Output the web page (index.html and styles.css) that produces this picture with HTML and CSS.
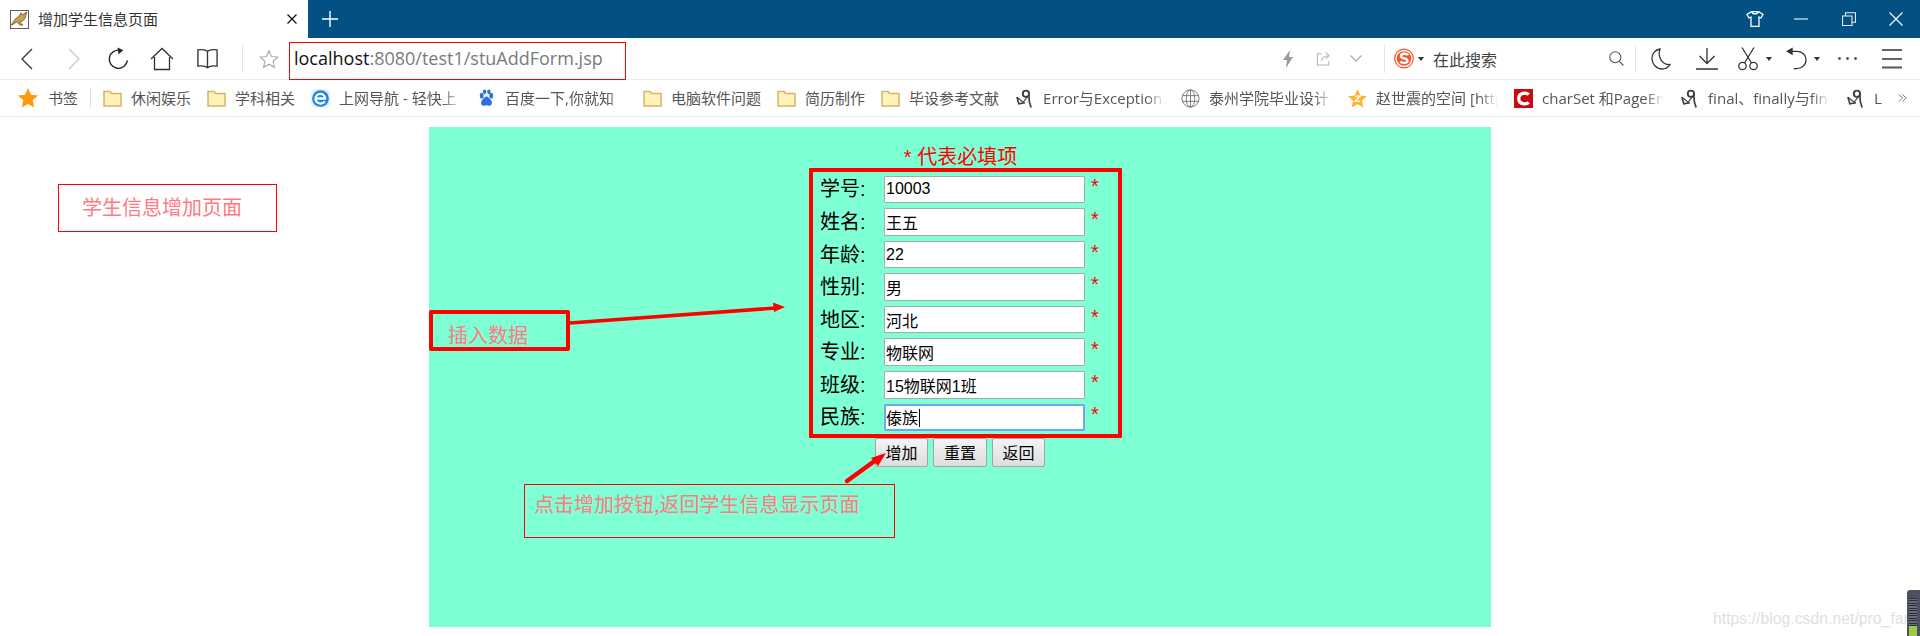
FILE: index.html
```html
<!DOCTYPE html>
<html lang="zh">
<head>
<meta charset="utf-8">
<title>增加学生信息页面</title>
<link rel="stylesheet" href="styles.css">
</head>
<body>
<div class="titlebar">
  <div class="tab">
    <svg class="favicon" viewBox="0 0 20 20"><rect x=".5" y=".5" width="19" height="19" fill="#fff" stroke="#555"/><path d="M1.500 16c3-6 5-8 8-9l2-4 2 2 4-3-1.500 6c-1 3-4 4.500-6 4.500l3.500 3.500-3.500-.5-3-3-3 2z" fill="#c9a24a" stroke="#5d3f17" stroke-width=".8"/></svg>
    <span class="tab-title">增加学生信息页面</span>
    <svg class="tab-close" viewBox="0 0 10 10"><path d="M.5.5l9 9M9.500.5l-9 9" stroke="#111" stroke-width="1.300" fill="none"/></svg>
  </div>
  <svg class="newtab" viewBox="0 0 16 16"><path d="M8 0v16M0 8h16" stroke="#fff" stroke-width="1.400" fill="none"/></svg>
  <div class="winbtns">
    <svg class="w-shirt" viewBox="0 0 18 16"><path d="M5.500.7H12.500L17 3.500l-2 3.500-2-1v9.300H5V6L3 7 1 3.500zM6 1c.5 2.500 5.500 2.500 6 0" fill="none" stroke="#fff" stroke-width="1.300"/></svg>
    <svg class="w-min" viewBox="0 0 14 14"><path d="M0 7h14" stroke="#dfe8ef" stroke-width="1.200"/></svg>
    <svg class="w-rest" viewBox="0 0 14 14"><path d="M.5 4h9.500v9.500H.5zM3.500 4V.8h10v9.400H10" fill="none" stroke="#e8eef3" stroke-width="1.100"/></svg>
    <svg class="w-close" viewBox="0 0 14 14"><path d="M.5.5l13 13M13.500.5l-13 13" stroke="#f3f6f8" stroke-width="1.200"/></svg>
  </div>
</div>

<div class="toolbar">
  <svg class="i i-back" viewBox="0 0 24 22"><path d="M17 1 7 11l10 10" fill="none" stroke="#333" stroke-width="1.300"/></svg>
  <svg class="i i-fwd" viewBox="0 0 24 22"><path d="M7 1l10 10L7 21" fill="none" stroke="#c9c9c9" stroke-width="1.300"/></svg>
  <svg class="i i-reload" viewBox="0 0 24 24"><path d="M14 3.500A9.500 9.500 0 1 0 21.300 14" fill="none" stroke="#222" stroke-width="1.500"/><path d="M11 .5l6 3-5 4z" fill="#222"/></svg>
  <svg class="i i-home" viewBox="0 0 24 24"><path d="M1 12 12 1.500 23 12M4.500 10v12.500h15V10" fill="none" stroke="#333" stroke-width="1.300"/></svg>
  <svg class="i i-book" viewBox="0 0 24 24"><path d="M12 4.500C10 2.800 6 2.500 2 3v17c4-.5 8 0 10 1.500 2-1.500 6-2 10-1.500V3c-4-.5-8-.2-10 1.500zM12 4.500v17" fill="none" stroke="#333" stroke-width="1.400"/></svg>
  <span class="vsep vsep-a"></span>
  <svg class="i i-star" viewBox="0 0 24 24"><path d="M12 2l3 7 7.500.7-5.600 5 1.700 7.300L12 18.200 5.400 22l1.700-7.300-5.600-5L9 9z" fill="none" stroke="#a8a8a8" stroke-width="1.300"/></svg>
  <div class="url"><span class="host">localhost</span>:8080/test1/stuAddForm.jsp</div>
  <svg class="i i-bolt" viewBox="0 0 10 18"><path d="M7 0 0 10h4l-1 8 7-11H6z" fill="#9a9a9a"/></svg>
  <svg class="i i-share" viewBox="0 0 16 16"><path d="M6 3H1.500v12h12v-4M6 11c0-4 3-6 8-6M10.500 1.500 14 5l-3.500 3.500" fill="none" stroke="#b5b5b5" stroke-width="1.100"/></svg>
  <svg class="i i-chev" viewBox="0 0 12 7"><path d="M.5.5 6 6l5.500-5.500" fill="none" stroke="#a5a5a5" stroke-width="1.100"/></svg>
  <span class="vsep vsep-b"></span>
  <svg class="i i-sogou" viewBox="0 0 20 24"><circle cx="10" cy="11.500" r="9.300" fill="#fff" stroke="#f2572b" stroke-width="1.200"/><circle cx="10" cy="11.500" r="7.300" fill="#f2572b"/><path d="M14 8.300c-1-2-7-2.500-7 .9 0 3 6.500 1.500 6.500 4.600 0 2.700-5.500 2.700-7.300.7" fill="none" stroke="#fff" stroke-width="2.400"/></svg>
  <span class="caret-down caret-s"></span>
  <span class="search-text">在此搜索</span>
  <svg class="i i-search" viewBox="0 0 15 15"><circle cx="6.300" cy="6.300" r="5.500" fill="none" stroke="#555" stroke-width="1.100"/><path d="m10.300 10.300 4.200 4.200" stroke="#555" stroke-width="1.100"/></svg>
  <span class="vsep vsep-c"></span>
  <svg class="i i-moon" viewBox="0 0 20 22"><path d="M9 1C3.500 2 .8 6.500 1 11c.3 5.500 4.500 10 10 10 3.500 0 6.500-1.800 8-4.500C12 17 6 10 9 1z" fill="none" stroke="#333" stroke-width="1.300"/></svg>
  <svg class="i i-down" viewBox="0 0 22 22"><path d="M11 0v15M3.500 8 11 15.500 18.500 8M0 21h22" fill="none" stroke="#333" stroke-width="1.300"/></svg>
  <svg class="i i-scis" viewBox="0 0 20 24"><circle cx="4.500" cy="19" r="3.700" fill="none" stroke="#333" stroke-width="1.300"/><circle cx="15.500" cy="19" r="3.700" fill="none" stroke="#333" stroke-width="1.300"/><path d="M6.500 16 16 .5M13.500 16 4 .5" fill="none" stroke="#333" stroke-width="1.300"/></svg>
  <span class="caret-down caret-x"></span>
  <svg class="i i-undo" viewBox="0 0 22 24"><path d="M6 4h5c6 0 10 3.500 10 9s-5 9-10 9H8" fill="none" stroke="#333" stroke-width="1.300"/><path d="M0 4l7-4v8z" fill="#333"/></svg>
  <span class="caret-down caret-u"></span>
  <svg class="i i-dots" viewBox="0 0 19 3"><circle cx="1.500" cy="1.500" r="1.300" fill="#333"/><circle cx="9.500" cy="1.500" r="1.300" fill="#333"/><circle cx="17.500" cy="1.500" r="1.300" fill="#333"/></svg>
  <svg class="i i-menu" viewBox="0 0 20 20"><path d="M0 1h20M0 10h20" stroke="#333" stroke-width="1.300"/><path d="M0 18.500h20" stroke="#555" stroke-width="2"/></svg>
</div>

<div class="bookmarks">
  <svg class="bm-star" viewBox="0 0 20 20"><path d="m10 0 3 6.800 7 .7-5.300 4.800 1.500 7.200L10 16l-6.200 3.500 1.500-7.200L0 7.500l7-.7z" fill="#ff9a0d"/></svg>
  <span class="bm-text bm-first">书签</span>
  <span class="bm-sep"></span>
  <div class="bm"><svg class="folder" viewBox="0 0 19 17"><path d="M1 1.500h6l1.500 2H18v12.500H1z" fill="#fff3b8" stroke="#d9b368" stroke-width="1.500"/></svg><span class="bm-text">休闲娱乐</span></div>
  <div class="bm"><svg class="folder" viewBox="0 0 19 17"><path d="M1 1.500h6l1.500 2H18v12.500H1z" fill="#fff3b8" stroke="#d9b368" stroke-width="1.500"/></svg><span class="bm-text">学科相关</span></div>
  <div class="bm"><svg class="fav" viewBox="0 0 20 20"><rect width="20" height="20" rx="5" fill="#e9eff5"/><circle cx="10" cy="10" r="8.800" fill="#1688ea"/><path d="M4.800 10h10c0-6.500-10-6.500-10 .3 0 5.700 7.500 6.200 9.700 2.700" fill="none" stroke="#fff" stroke-width="2.400"/></svg><span class="bm-text fade">上网导航 - 轻快上</span></div>
  <div class="bm"><svg class="fav" viewBox="0 0 20 20"><g fill="#2b6fe0"><ellipse cx="5" cy="7" rx="2" ry="3"/><ellipse cx="15" cy="7" rx="2" ry="3"/><ellipse cx="8" cy="3" rx="1.800" ry="2.600"/><ellipse cx="12.500" cy="3" rx="1.800" ry="2.600"/><path d="M10 8c2 0 3 2 4.500 3.500 2 2 1.500 6-1.500 6-1.500 0-2-.5-3-.5s-1.500.5-3 .5c-3 0-3.500-4-1.500-6C7 10 8 8 10 8z"/></g></svg><span class="bm-text fade">百度一下,你就知</span></div>
  <div class="bm"><svg class="folder" viewBox="0 0 19 17"><path d="M1 1.500h6l1.500 2H18v12.500H1z" fill="#fff3b8" stroke="#d9b368" stroke-width="1.500"/></svg><span class="bm-text">电脑软件问题</span></div>
  <div class="bm"><svg class="folder" viewBox="0 0 19 17"><path d="M1 1.500h6l1.500 2H18v12.500H1z" fill="#fff3b8" stroke="#d9b368" stroke-width="1.500"/></svg><span class="bm-text">简历制作</span></div>
  <div class="bm"><svg class="folder" viewBox="0 0 19 17"><path d="M1 1.500h6l1.500 2H18v12.500H1z" fill="#fff3b8" stroke="#d9b368" stroke-width="1.500"/></svg><span class="bm-text">毕设参考文献</span></div>
  <div class="bm"><svg class="fav" viewBox="0 0 18 20"><use href="#blog-icon"/></svg><span class="bm-text fade">Error与Exception</span></div>
  <div class="bm"><svg class="fav" viewBox="0 0 20 20"><g fill="none" stroke="#777" stroke-width="1"><circle cx="10" cy="10" r="9"/><ellipse cx="10" cy="10" rx="4.500" ry="9"/><path d="M10 1v18M1.500 7h17M1.500 13h17"/></g></svg><span class="bm-text fade wide">泰州学院毕业设计</span></div>
  <div class="bm"><svg class="fav" viewBox="0 0 20 20"><path d="m10 0 3 6.800 7 .7-5.300 4.800 1.500 7.200L10 16l-6.200 3.500 1.500-7.200L0 7.500l7-.7z" fill="#ffb52e"/><path d="M7.500 7.500h5l-5 5.500h5" fill="none" stroke="#fff" stroke-width="1.500"/></svg><span class="bm-text fade">赵世震的空间 [http</span></div>
  <div class="bm"><svg class="fav" viewBox="0 0 20 20"><rect width="20" height="20" fill="#c70a14"/><path d="M15.500 6C13 3.300 5 3.500 5 10s8 6.700 10.500 4" fill="none" stroke="#fff" stroke-width="3.500"/></svg><span class="bm-text fade">charSet 和PageEn</span></div>
  <div class="bm"><svg class="fav" viewBox="0 0 18 20"><use href="#blog-icon"/></svg><span class="bm-text fade">final、finally与fina</span></div>
  <div class="bm"><svg class="fav" viewBox="0 0 18 20"><use href="#blog-icon"/></svg><span class="bm-text">L</span></div>
  <svg class="bm-more" viewBox="0 0 10 10"><path d="M1 1l4 4-4 4M5 1l4 4-4 4" fill="none" stroke="#777" stroke-width="1.100"/></svg>
</div>

<main class="page">
  <section class="panel">
    <h1 class="req-title">* 代表必填项</h1>
    <form class="stu-form">
      <div class="row"><label class="lbl">学号:</label><input class="field" value="10003"><span class="req">*</span></div>
      <div class="row"><label class="lbl">姓名:</label><input class="field" value="王五"><span class="req">*</span></div>
      <div class="row"><label class="lbl">年龄:</label><input class="field" value="22"><span class="req">*</span></div>
      <div class="row"><label class="lbl">性别:</label><input class="field" value="男"><span class="req">*</span></div>
      <div class="row"><label class="lbl">地区:</label><input class="field" value="河北"><span class="req">*</span></div>
      <div class="row"><label class="lbl">专业:</label><input class="field" value="物联网"><span class="req">*</span></div>
      <div class="row"><label class="lbl">班级:</label><input class="field" value="15物联网1班"><span class="req">*</span></div>
      <div class="row"><label class="lbl">民族:</label><input class="field focused" value="傣族"><span class="req">*</span></div>
      <div class="btns">
        <button type="button" class="btn">增加</button>
        <button type="button" class="btn">重置</button>
        <button type="button" class="btn">返回</button>
      </div>
    </form>
  </section>
</main>

<div class="note note-url"></div>
<div class="note note-form"></div>
<div class="note note-page">学生信息增加页面</div>
<div class="note note-insert">插入数据</div>
<div class="note note-back">点击增加按钮,返回学生信息显示页面</div>
<span class="text-caret"></span>
<svg class="arrows" viewBox="0 0 1920 636">
  <defs>
    <g id="blog-icon" fill="none" stroke="#3d3d3d">
      <circle cx="10.500" cy="5" r="3.300" stroke-width="2"/>
      <path d="M1 8.500 3 15.500 9.500 14.500" stroke-width="1.700"/>
      <path d="M1.500 9 7.500 14 12.500 7.500" stroke-width="1.200"/>
      <path d="M13.500 6c0 5 .5 9 2.500 13.500" stroke-width="1.800"/>
    </g>
  </defs>
  <path d="M570 323 776 308" stroke="#f00" stroke-width="3.500" fill="none"/>
  <path d="M785 307 773 302.500 774 312z" fill="#f00"/>
  <path d="M847 481 876 460" stroke="#f00" stroke-width="4.500" fill="none" stroke-linecap="round"/>
  <path d="M886 453 871 458 878 466z" fill="#f00"/>
</svg>
<span class="watermark">https://blog.csdn.net/pro_fan</span>
<div class="meter"><i></i></div>
</body>
</html>
```
FILE: styles.css
```css
* { box-sizing: border-box; }
html, body { margin: 0; height: 636px; overflow: hidden; background: #fff; }
body { position: relative; font-family: "Open Sans", "Noto Sans CJK SC", sans-serif; }

.titlebar { display: flex; align-items: center; height: 38px; background: #035085; }
.tab { display: flex; align-items: center; width: 308px; height: 38px; background: #fff; padding-left: 10px; }
.favicon { width: 19px; height: 19px; }
.tab-title { margin-left: 9px; font: 15px/20px "Noto Sans CJK SC", sans-serif; color: #333; }
.tab-close { width: 10px; height: 10px; margin-left: 129px; }
.newtab { width: 16px; height: 16px; margin-left: 14px; }
.winbtns { display: flex; align-items: center; margin-left: auto; padding-right: 17px; }
.w-shirt { width: 18px; height: 16px; }
.w-min { width: 14px; height: 14px; margin-left: 30px; }
.w-rest { width: 14px; height: 14px; margin-left: 34px; }
.w-close { width: 14px; height: 14px; margin-left: 33px; }

.toolbar { display: flex; align-items: center; height: 42px; background: #fff; border-bottom: 1px solid #ebebeb; }
.i { flex: none; display: block; }
.i-back { width: 24px; height: 22px; margin-left: 15px; }
.i-fwd { width: 24px; height: 22px; margin-left: 23px; }
.i-reload { width: 23px; height: 23px; margin-left: 21px; }
.i-home { width: 24px; height: 24px; margin-left: 20px; }
.i-book { width: 23px; height: 23px; margin-left: 22px; }
.vsep { flex: none; width: 1px; background: #e4e4e4; }
.vsep-a { height: 28px; margin-left: 23px; }
.i-star { width: 20px; height: 20px; margin-left: 16px; }
.url { width: 1000px; flex: none; margin-left: 15px; padding-bottom: 1px; font-size: 18px; line-height: 26px; color: #7a7a7a; white-space: nowrap; }
.host { color: #111; }
.i-bolt { width: 10px; height: 18px; margin-left: -11px; }
.i-share { width: 15px; height: 15px; margin-left: 23px; }
.i-chev { width: 12px; height: 7px; margin-left: 19px; }
.vsep-b { height: 28px; margin-left: 22px; }
.i-sogou { width: 20px; height: 24px; margin-left: 9px; }
.caret-down { flex: none; width: 0; height: 0; border-left: 3.500px solid transparent; border-right: 3.500px solid transparent; border-top: 4px solid #333; }
.caret-s { margin-left: 4px; }
.search-text { width: 176px; flex: none; margin-left: 9px; font: 16px/22px "Noto Sans CJK SC", sans-serif; color: #444; }
.i-search { width: 15px; height: 15px; }
.vsep-c { height: 28px; margin-left: 11px; }
.i-moon { width: 20px; height: 22px; margin-left: 15px; }
.i-down { width: 22px; height: 22px; margin-left: 25px; }
.i-scis { width: 20px; height: 24px; margin-left: 20px; }
.caret-x { margin-left: 8px; }
.i-undo { width: 21px; height: 24px; margin-left: 14px; }
.caret-u { margin-left: 7px; }
.i-dots { width: 19px; height: 3px; margin-left: 18px; }
.i-menu { width: 20px; height: 20px; margin-left: 25px; }

.bookmarks { display: flex; align-items: center; height: 37px; padding-left: 18px; background: #fff; border-bottom: 1px solid #ebebeb; gap: 16px; overflow: hidden; white-space: nowrap; }
.bm-star { flex: none; width: 20px; height: 20px; margin-right: -6px; }
.bm { display: flex; flex: none; align-items: center; gap: 9px; }
.bm-text { font-size: 15px; line-height: 20px; color: #555; }
.bm-text.fade { display: block; width: 122px; overflow: hidden; -webkit-mask-image: linear-gradient(90deg, #000 85%, transparent); mask-image: linear-gradient(90deg, #000 85%, transparent); }
.bm-text.wide { width: 123px; }
.bm-sep { flex: none; width: 1px; height: 18px; margin: 0 -4px; background: #ddd; }
.folder { flex: none; width: 19px; height: 17px; }
.fav { flex: none; width: 19px; height: 19px; }
.bm-more { flex: none; width: 9px; height: 10px; }

.page { display: flex; justify-content: center; height: 519px; padding-top: 10px; }
.panel { width: 1062px; height: 500px; background: #7fffd4; }
.req-title { margin: 19px 0 0; font: 400 20px/23px "Liberation Sans", "Noto Sans CJK SC", sans-serif; color: #f00; text-align: center; padding-left: 1px; height: 29.400px; }
.stu-form { display: flex; flex-direction: column; align-items: center; gap: 4.570px; }
.row { display: flex; align-items: center; width: 280px; height: 28px; }
.lbl { width: 64px; flex: none; padding-top: 1px; font: 20px/27px "Liberation Sans", "Noto Sans CJK SC", sans-serif; color: #000; }
.field { width: 201px; height: 27.570px; flex: none; padding: 0 1px; border: 1px solid #a9a9a9; border-radius: 1px; background: #fff; font: 16px "Liberation Sans", "Noto Sans CJK SC", sans-serif; color: #000; }
.field.focused { padding: 0; border: 2px solid #6aa9ec; border-radius: 2px; }
.req { margin: -6px 0 0 6px; font: 20px/20px "Liberation Sans", sans-serif; color: #f00; }
.btns { display: flex; gap: 5px; margin-top: 2px; }
.btn { width: 53.500px; height: 29px; padding: 0; border: 1px solid #a4a4a4; border-radius: 2px; background: linear-gradient(#f3f3f3, #dedede); font: 16px "Liberation Sans", "Noto Sans CJK SC", sans-serif; color: #000; }

.note { position: absolute; border: 1px solid #f00; font: 20px/24px "Noto Sans CJK SC", sans-serif; color: #ff7a82; white-space: nowrap; }
.note-url { left: 289px; top: 42px; width: 337px; height: 38px; }
.note-form { left: 809px; top: 168px; width: 313px; height: 270px; border: 4px solid #f00; border-radius: 1px; }
.note-page { left: 58px; top: 184px; width: 219px; height: 48px; padding: 10px 0 0 23px; }
.note-insert { left: 429px; top: 310px; width: 141px; height: 41px; padding: 9px 0 0 15px; border: 4px solid #f00; border-radius: 2px; }
.note-back { left: 524px; top: 484px; width: 371px; height: 54px; padding: 7px 0 0 9px; }
.text-caret { position: absolute; left: 919px; top: 409px; width: 1px; height: 18px; background: #000; }
.arrows { position: absolute; left: 0; top: 0; width: 1920px; height: 636px; pointer-events: none; }
.watermark { position: absolute; left: 1713px; top: 608px; font: 15.800px/22px "Liberation Sans", sans-serif; color: #dfdfdf; white-space: nowrap; }
.meter { position: absolute; left: 1907px; top: 590px; width: 13px; height: 46px; padding: 8px 3px 0 2px; background: #4d5262; border-radius: 3px 0 0 0; }
.meter i { display: block; height: 38px; background: linear-gradient(transparent 28px, #9ccb4a 28px), repeating-linear-gradient(#2b2e38 0 1px, #6a6f7d 1px 2.500px); background-blend-mode: normal; }
```
